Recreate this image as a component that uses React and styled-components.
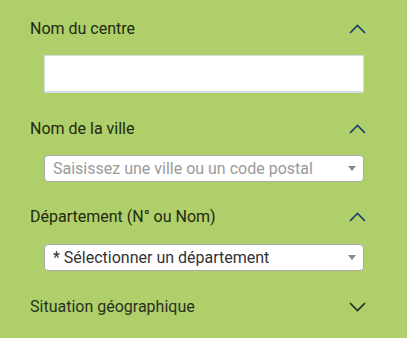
import React from "react";
import styled, { createGlobalStyle } from "styled-components";

const Global = createGlobalStyle`
  html, body { margin: 0; padding: 0; }
  body { background: #aecf69; font-family: Roboto, "Liberation Sans", sans-serif; }
`;

const Panel = styled.div`
  width: 407px;
  height: 338px;
  box-sizing: border-box;
  background: #aecf69;
  padding: 17px 43px 0 30px;
  display: flex;
  flex-direction: column;
`;

const Section = styled.section`
  display: flex;
  flex-direction: column;
  padding-bottom: ${(p) => p.$after}px;
`;

const Header = styled.div`
  height: 24px;
  display: flex;
  align-items: center;
  justify-content: space-between;
  font-size: 16px;
  line-height: 24px;
  color: ${(p) => (p.$open ? "#1f2a10" : "#2a2f22")};
`;

const Title = styled.span``;

const Chevron = styled.svg`
  width: 17px;
  height: 10px;
  margin-right: -2px;
  display: block;
`;

const Body = styled.div`
  padding: ${(p) => p.$top}px 0 0 14px;
`;

const TextBox = styled.div`
  height: 38px;
  box-sizing: border-box;
  background: #fff;
  border: 1px solid #d3dbe3;
  border-bottom-width: 2px;
`;

const SelectBox = styled.div`
  height: 27px;
  box-sizing: border-box;
  background: #fff;
  border: 1px solid #a9a9a9;
  border-radius: 4px;
  display: flex;
  align-items: center;
  padding: 0 7px 0 8px;
  font-size: 16px;
  color: ${(p) => (p.$placeholder ? "#9a9a9a" : "#333")};
`;

const SelectText = styled.span`
  flex: 1;
  white-space: nowrap;
  overflow: hidden;
`;

const Caret = styled.span`
  width: 0;
  height: 0;
  border-left: 4px solid transparent;
  border-right: 4px solid transparent;
  border-top: 5px solid #888;
`;

const Up = ({ color }) => (
  <Chevron viewBox="0 0 17 10">
    <path d="M1 9 L8.5 1.5 L16 9" fill="none" stroke={color} strokeWidth="1.6" />
  </Chevron>
);

const Down = ({ color }) => (
  <Chevron viewBox="0 0 17 10">
    <path d="M1 1 L8.5 8.5 L16 1" fill="none" stroke={color} strokeWidth="1.6" />
  </Chevron>
);

export default function App() {
  return (
    <>
      <Global />
      <Panel>
        <Section $after={24}>
          <Header $open>
            <Title>Nom du centre</Title>
            <Up color="#1d3f6e" />
          </Header>
          <Body $top={14}>
            <TextBox />
          </Body>
        </Section>
        <Section $after={23}>
          <Header $open>
            <Title>Nom de la ville</Title>
            <Up color="#1d3f6e" />
          </Header>
          <Body $top={14}>
            <SelectBox $placeholder>
              <SelectText>Saisissez une ville ou un code postal</SelectText>
              <Caret />
            </SelectBox>
          </Body>
        </Section>
        <Section $after={24}>
          <Header $open>
            <Title>Département (N° ou Nom)</Title>
            <Up color="#1d3f6e" />
          </Header>
          <Body $top={15}>
            <SelectBox>
              <SelectText>* Sélectionner un département</SelectText>
              <Caret />
            </SelectBox>
          </Body>
        </Section>
        <Section $after={0}>
          <Header>
            <Title>Situation géographique</Title>
            <Down color="#23281c" />
          </Header>
        </Section>
      </Panel>
    </>
  );
}
